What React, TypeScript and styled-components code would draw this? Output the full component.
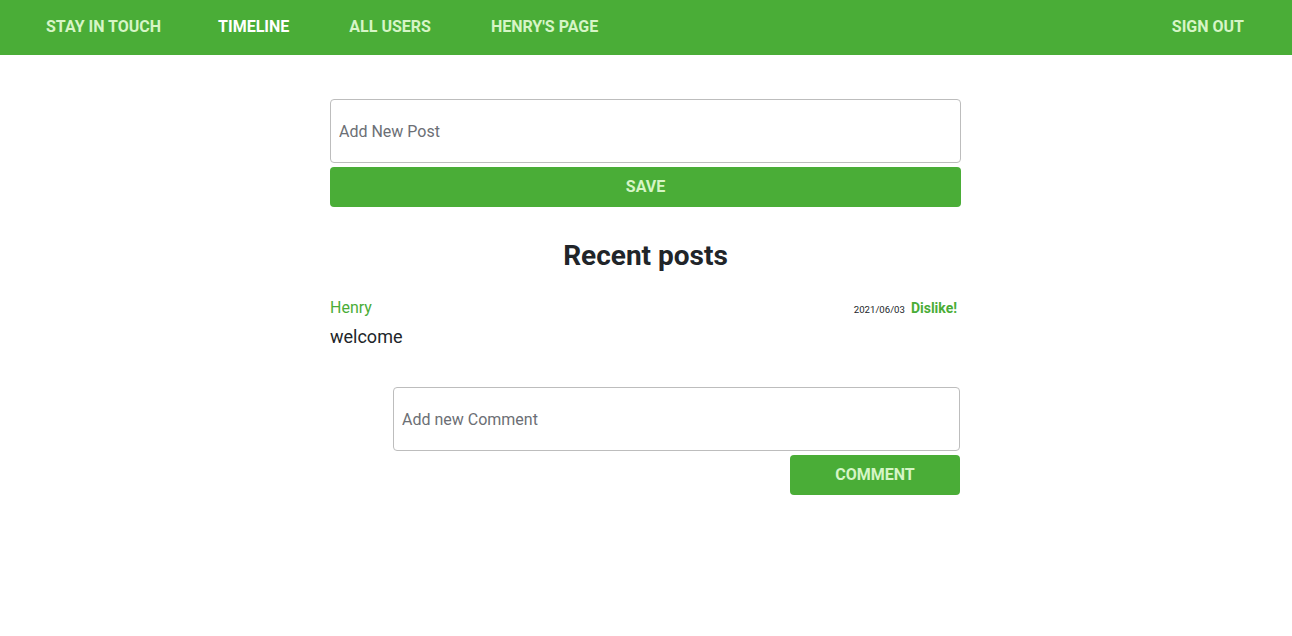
import React from "react";
import styled, { createGlobalStyle } from "styled-components";

const GREEN = "#4aad37";
const LIGHT = "#d6f5c6";

const Global = createGlobalStyle`
  body { margin: 0; font-family: Roboto, "Liberation Sans", sans-serif; background: #fff; color: #212529; }
  * { box-sizing: border-box; }
`;

const Nav = styled.nav`
  height: 55px;
  background: ${GREEN};
  display: flex;
  align-items: center;
  padding: 0 18px 0 16px;
`;

const NavLink = styled.a<{ $active?: boolean }>`
  padding: 0 30px;
  font-size: 16px;
  font-weight: 700;
  color: ${(p) => (p.$active ? "#ffffff" : LIGHT)};
  text-decoration: none;
  text-transform: uppercase;
  line-height: 53px;
  padding-bottom: 2px;
`;

const Brand = styled(NavLink)`
  padding-right: 27px;
`;

const Spacer = styled.div`
  flex: 1;
`;

const Main = styled.main`
  width: 631px;
  margin: 44px 0 0 calc(50% - 316px);
  display: flex;
  flex-direction: column;
`;

const TextBox = styled.input`
  width: 100%;
  height: 64px;
  border: 1px solid #bdbdbd;
  border-radius: 4px;
  padding: 0 8px;
  font-family: Roboto, sans-serif;
  font-size: 16px;
  color: #212529;
  outline: none;
  &::placeholder { color: #6c6f75; }
`;

const Button = styled.button<{ $width?: string }>`
  height: 40px;
  width: ${(p) => p.$width || "100%"};
  margin-top: 4px;
  padding: 0 0 2px;
  background: ${GREEN};
  border: none;
  border-radius: 4px;
  color: ${LIGHT};
  font-family: Roboto, sans-serif;
  font-size: 16px;
  font-weight: 700;
  text-transform: uppercase;
  cursor: pointer;
`;

const Heading = styled.h2`
  margin: 33px 0 0;
  text-align: center;
  font-size: 28px;
  font-weight: 700;
  line-height: 32px;
  color: #212529;
`;

const PostHeader = styled.div`
  margin-top: 24px;
  display: flex;
  align-items: center;
  justify-content: space-between;
  height: 22px;
`;

const Author = styled.a`
  color: ${GREEN};
  font-size: 16px;
  text-decoration: none;
`;

const Meta = styled.div`
  display: flex;
  align-items: center;
  gap: 6px;
  padding: 2px 4px 0 0;
`;

const DateText = styled.span`
  font-size: 9.6px;
  color: #212529;
  padding-top: 2px;
`;

const Dislike = styled.a`
  font-size: 14px;
  font-weight: 700;
  color: ${GREEN};
  text-decoration: none;
`;

const Body = styled.p`
  margin: 8px 0 0;
  font-size: 18px;
  line-height: 22px;
`;

const CommentBlock = styled.div`
  margin: 39px 1px 0 63px;
  display: flex;
  flex-direction: column;
  align-items: flex-end;
`;

export default function App() {
  return (
    <>
      <Global />
      <Nav>
        <Brand>Stay in touch</Brand>
        <NavLink $active>Timeline</NavLink>
        <NavLink>All users</NavLink>
        <NavLink>Henry's page</NavLink>
        <Spacer />
        <NavLink>Sign out</NavLink>
      </Nav>
      <Main>
        <TextBox placeholder="Add New Post" />
        <Button>Save</Button>
        <Heading>Recent posts</Heading>
        <PostHeader>
          <Author>Henry</Author>
          <Meta>
            <DateText>2021/06/03</DateText>
            <Dislike>Dislike!</Dislike>
          </Meta>
        </PostHeader>
        <Body>welcome</Body>
        <CommentBlock>
          <TextBox placeholder="Add new Comment" />
          <Button $width="170px">Comment</Button>
        </CommentBlock>
      </Main>
    </>
  );
}
